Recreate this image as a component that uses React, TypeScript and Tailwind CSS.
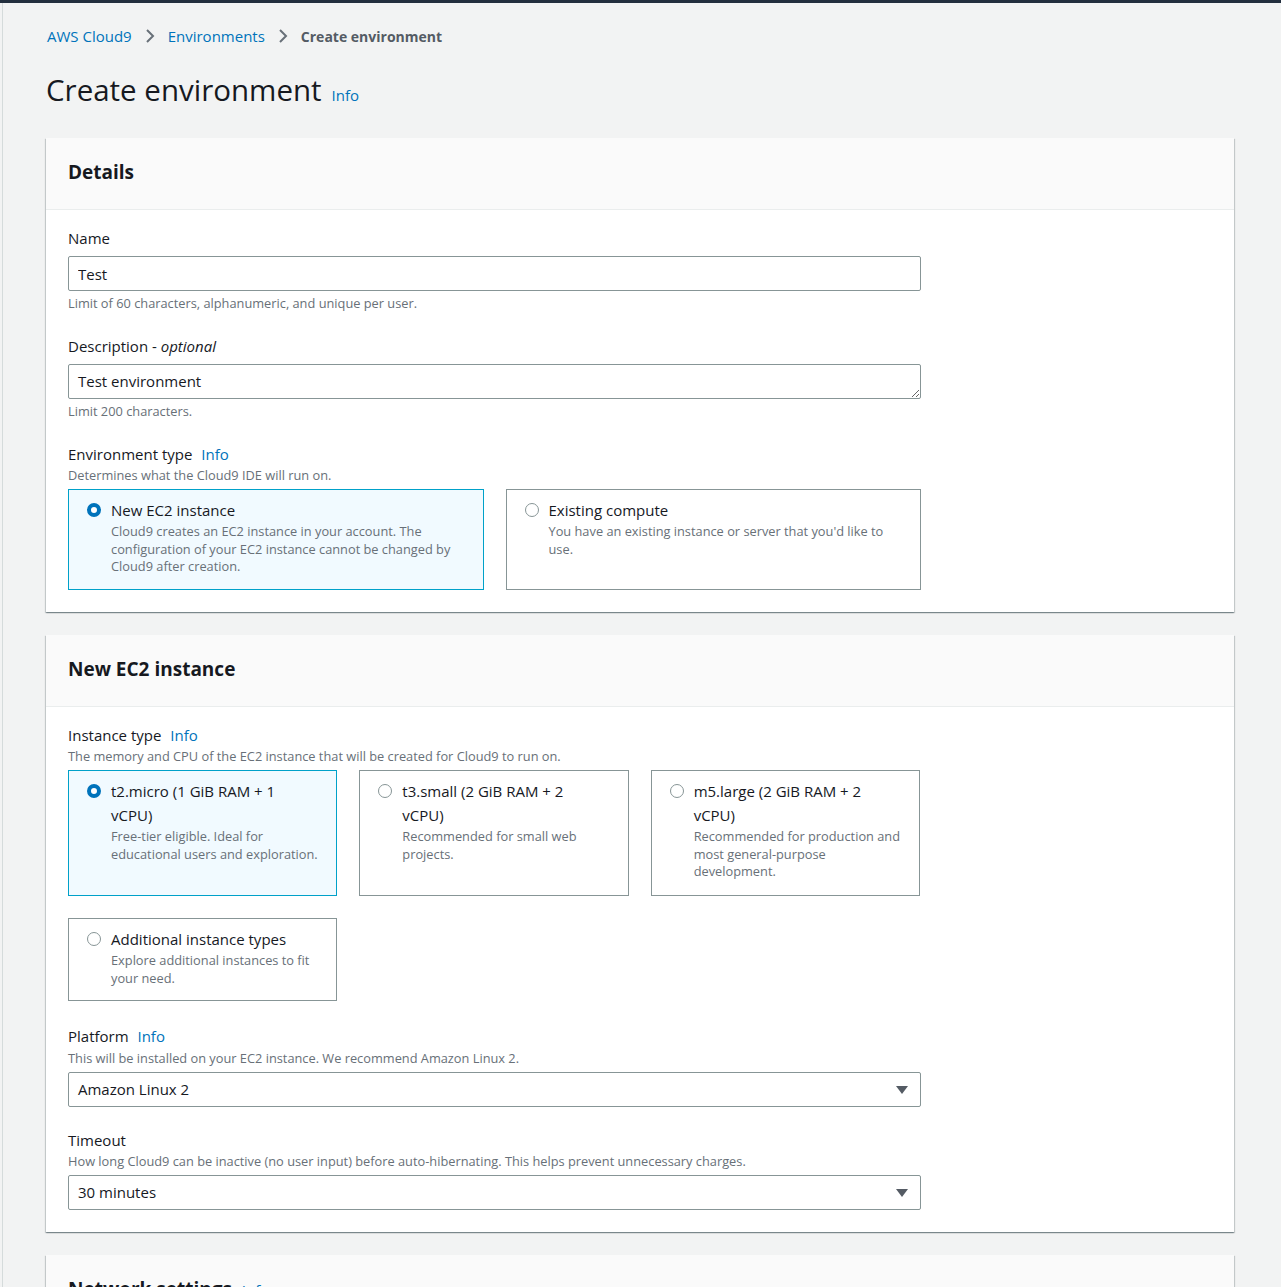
import React from "react"

const font = { fontFamily: '"Open Sans", "Noto Sans", Arial, sans-serif' }

const Info = ({ className = "" }: { className?: string }) => (
  <span className={`text-[#0073bb] ${className}`}>Info</span>
)

const Radio = ({ checked }: { checked?: boolean }) =>
  checked ? (
    <span className="mt-[5px] box-border inline-block h-[14px] w-[14px] shrink-0 rounded-full border-[4px] border-[#0073bb] bg-white" />
  ) : (
    <span className="mt-[5px] box-border inline-block h-[14px] w-[14px] shrink-0 rounded-full border border-[#879596] bg-white" />
  )

interface TileProps {
  checked?: boolean
  title: React.ReactNode
  desc: React.ReactNode
}

const Tile = ({ checked, title, desc }: TileProps) => (
  <div
    className={`flex gap-[10px] border pl-[18px] pr-3 pt-[8px] ${
      checked ? "border-[#00a1c9] bg-[#f1faff]" : "border-[#879596] bg-white"
    }`}
  >
    <Radio checked={checked} />
    <div className="whitespace-nowrap">
      <div className="text-[15px] leading-[24px] text-[#16191f]">{title}</div>
      <div className="mt-[1px] text-[12.8px] leading-[17.5px] text-[#687078]">{desc}</div>
    </div>
  </div>
)

const Label = ({ children }: { children: React.ReactNode }) => (
  <div className="text-[15px] leading-[20px] text-[#16191f]">{children}</div>
)

const Hint = ({ children, className = "" }: { children: React.ReactNode; className?: string }) => (
  <div className={`text-[12.8px] leading-[18px] text-[#687078] ${className}`}>{children}</div>
)

const Select = ({ value }: { value: string }) => (
  <div className="flex h-[35px] w-[853px] items-center justify-between rounded-[2px] border border-[#879596] bg-white pl-[9px] pr-[12px] text-[15px] text-[#16191f]">
    <span>{value}</span>
    <svg width="12" height="8" viewBox="0 0 12 8">
      <path d="M0 0 H12 L6 8 Z" fill="#545b64" />
    </svg>
  </div>
)

const Card = ({ title, children }: { title: React.ReactNode; children?: React.ReactNode }) => (
  <div className="bg-white shadow-[0_1px_1px_0_rgba(0,28,36,0.3),1px_1px_1px_0_rgba(0,28,36,0.15),-1px_1px_1px_0_rgba(0,28,36,0.15)]">
    <div className="h-[72px] border-b border-[#eaeded] bg-[#fafafa] px-[22px] pt-[23px]">
      <h2 className="text-[19px] font-bold leading-[22px] text-[#16191f]">{title}</h2>
    </div>
    {children}
  </div>
)

const Chevron = () => (
  <svg width="10" height="16" viewBox="0 0 10 16" className="mx-[13px]">
    <path d="M2 2 L8 8 L2 14" fill="none" stroke="#687078" strokeWidth="2" />
  </svg>
)

export default function App() {
  return (
    <div style={font} className="min-h-[1287px] bg-[#f2f3f3]">
      <div className="h-[3px] bg-[#232f3e]" />
      <div className="ml-[2px] min-h-[1284px] border-l border-[#d5dbdb] pl-[43px] pr-[47px]">
        <nav className="flex h-[68px] items-center pb-[2px] pl-[1px] text-[15px]">
          <span className="text-[#0073bb]">AWS Cloud9</span>
          <Chevron />
          <span className="text-[#0073bb]">Environments</span>
          <Chevron />
          <span className="text-[14px] font-bold text-[#545b64]">Create environment</span>
        </nav>
        <div className="-mt-[1px] flex h-[40px] items-baseline">
          <h1 className="text-[29.5px] leading-[40px] text-[#16191f]">Create environment</h1>
          <Info className="ml-[10px] text-[15px]" />
        </div>
        <div className="h-[28px]" />

        <Card title="Details">
          <div className="px-[22px] pb-[22px] pt-[18px]">
            <Label>Name</Label>
            <input
              readOnly
              value="Test"
              className="mt-2 block h-[35px] w-[853px] rounded-[2px] border border-[#879596] px-[9px] text-[15px] text-[#16191f] outline-none"
            />
            <Hint className="mt-[3px]">Limit of 60 characters, alphanumeric, and unique per user.</Hint>

            <div className="mt-[24px]">
              <Label>
                Description - <i>optional</i>
              </Label>
            </div>
            <textarea
              readOnly
              value="Test environment"
              rows={1}
              className="mt-2 block h-[35px] w-[853px] resize-y rounded-[2px] border border-[#879596] px-[9px] py-[6px] text-[15px] leading-[21px] text-[#16191f] outline-none"
            />
            <Hint className="mt-[3px]">Limit 200 characters.</Hint>

            <div className="mt-[24px]">
              <Label>
                Environment type <Info className="ml-[5px]" />
              </Label>
            </div>
            <Hint className="mt-[2px]">Determines what the Cloud9 IDE will run on.</Hint>
            <div className="mt-[5px] grid w-[853px] grid-cols-2 grid-rows-[101px] gap-[22px]">
              <Tile
                checked
                title="New EC2 instance"
                desc={
                  <>
                    Cloud9 creates an EC2 instance in your account. The
                    <br />
                    configuration of your EC2 instance cannot be changed by
                    <br />
                    Cloud9 after creation.
                  </>
                }
              />
              <Tile
                title="Existing compute"
                desc={
                  <>
                    You have an existing instance or server that you'd like to
                    <br />
                    use.
                  </>
                }
              />
            </div>
          </div>
        </Card>

        <div className="h-[23px]" />

        <Card title="New EC2 instance">
          <div className="px-[22px] pb-[22px] pt-[18px]">
            <Label>
              Instance type <Info className="ml-[5px]" />
            </Label>
            <Hint className="mt-[2px]">The memory and CPU of the EC2 instance that will be created for Cloud9 to run on.</Hint>
            <div className="mt-[5px] grid w-[852px] grid-cols-3 grid-rows-[126px_83px] gap-x-[22px] gap-y-[22px]">
              <Tile
                checked
                title={
                  <>
                    t2.micro (1 GiB RAM + 1
                    <br />
                    vCPU)
                  </>
                }
                desc={
                  <>
                    Free-tier eligible. Ideal for
                    <br />
                    educational users and exploration.
                  </>
                }
              />
              <Tile
                title={
                  <>
                    t3.small (2 GiB RAM + 2
                    <br />
                    vCPU)
                  </>
                }
                desc={
                  <>
                    Recommended for small web
                    <br />
                    projects.
                  </>
                }
              />
              <Tile
                title={
                  <>
                    m5.large (2 GiB RAM + 2
                    <br />
                    vCPU)
                  </>
                }
                desc={
                  <>
                    Recommended for production and
                    <br />
                    most general-purpose
                    <br />
                    development.
                  </>
                }
              />
              <Tile
                title="Additional instance types"
                desc={
                  <>
                    Explore additional instances to fit
                    <br />
                    your need.
                  </>
                }
              />
            </div>

            <div className="mt-[25px]">
              <Label>
                Platform <Info className="ml-[5px]" />
              </Label>
            </div>
            <Hint className="mt-[3px]">This will be installed on your EC2 instance. We recommend Amazon Linux 2.</Hint>
            <div className="mt-[5px]">
              <Select value="Amazon Linux 2" />
            </div>

            <div className="mt-[23px]">
              <Label>Timeout</Label>
            </div>
            <Hint className="mt-[2px]">
              How long Cloud9 can be inactive (no user input) before auto-hibernating. This helps prevent unnecessary charges.
            </Hint>
            <div className="mt-[5px]">
              <Select value="30 minutes" />
            </div>
          </div>
        </Card>

        <div className="h-[23px]" />

        <Card
          title={
            <>
              Network settings <Info className="ml-[5px] text-[15px] font-normal" />
            </>
          }
        >
          <div className="h-[200px]" />
        </Card>
      </div>
    </div>
  )
}
